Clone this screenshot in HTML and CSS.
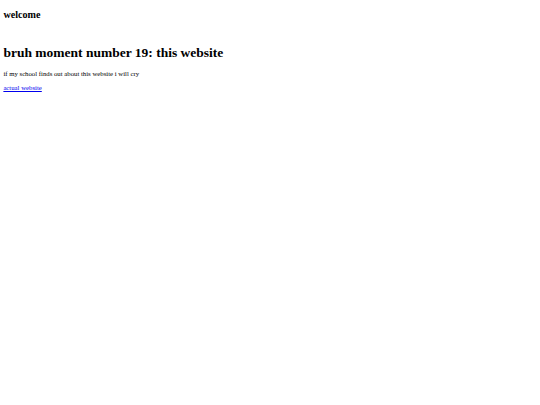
FILE: index.html
```html
<!DOCTYPE html>
<html>
<head>
<meta charset="utf-8">
<title>welcome</title>
<link rel="stylesheet" href="styles.css">
</head>
<body class="page">
<header class="site-header">
<h2 class="site-title">welcome</h2>
</header>
<main class="content">
<h1 class="headline">bruh moment number 19: this website</h1>
<p class="text">if my school finds out about this website i will cry</p>
<p class="text"><a class="link" href="#">actual website</a></p>
</main>
</body>
</html>
```
FILE: styles.css
```css
html {
  background: #ffffff;
}
.page {
  margin: 3.375px;
  font-family: "Liberation Serif", "Times New Roman", serif;
  color: #000000;
}
.site-header {
  padding-bottom: 8px;
}
.site-title {
  font-size: 10.125px;
  font-weight: bold;
  margin: 5.4px 0 8.4px;
}
.headline {
  font-size: 13.5px;
  font-weight: bold;
  margin: 9.1px 0;
}
.text {
  font-size: 6.75px;
  margin: 6.75px 0;
}
.link {
  color: #0000ee;
  text-decoration: underline;
}
```
